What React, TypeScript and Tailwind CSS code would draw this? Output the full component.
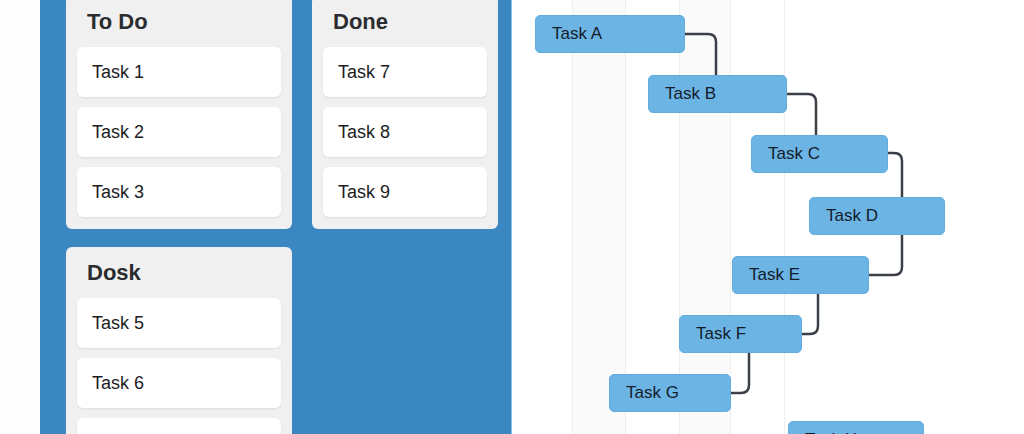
import React from 'react';

const font = { fontFamily: '"Liberation Sans", Arial, sans-serif' };

const columns = [
  { title: 'To Do', tasks: ['Task 1', 'Task 2', 'Task 3'] },
  { title: 'Done', tasks: ['Task 7', 'Task 8', 'Task 9'] },
  { title: 'Dosk', tasks: ['Task 5', 'Task 6', 'Task 7'] },
];

// gantt bars, coordinates relative to the chart canvas
const bars = [
  { label: 'Task A', left: 23, top: 15, width: 150 },
  { label: 'Task B', left: 136, top: 75, width: 139 },
  { label: 'Task C', left: 239, top: 135, width: 137 },
  { label: 'Task D', left: 297, top: 197, width: 136 },
  { label: 'Task E', left: 220, top: 256, width: 137 },
  { label: 'Task F', left: 167, top: 315, width: 123 },
  { label: 'Task G', left: 97, top: 374, width: 122 },
  { label: 'Task H', left: 276, top: 421, width: 136 },
];

const links = [
  'M173 34 H196 Q204 34 204 42 V75',
  'M275 94 H296 Q304 94 304 102 V135',
  'M376 153 H382 Q390 153 390 161 V197',
  'M390 235 V267 Q390 275 382 275 H357',
  'M306 294 V326 Q306 334 298 334 H290',
  'M237 353 V385 Q237 393 229 393 H219',
];

function Column({ title, tasks }: { title: string; tasks: string[] }) {
  return (
    <div className="rounded-md bg-[#f0f0f0] px-[11px] pt-3 pb-3">
      <h2 className="pl-[10px] text-[22px] leading-7 font-bold text-[#2a2c30] mb-[11px]">
        {title}
      </h2>
      <div className="flex flex-col gap-[10px]">
        {tasks.map((t, i) => (
          <div
            key={i}
            className="h-[50px] flex items-center rounded-md bg-white px-[15px] text-[18px] text-[#1c1c1e] shadow-[0_1px_2px_rgba(0,0,0,0.08)]"
          >
            {t}
          </div>
        ))}
      </div>
    </div>
  );
}

export default function App() {
  return (
    <div className="flex h-[434px] w-[1024px] overflow-hidden bg-white" style={font}>
      <div className="w-[40px] shrink-0 bg-[#fdfdfd]" />

      {/* kanban board */}
      <div className="w-[472px] shrink-0 bg-[#3a87c2] pl-[26px] pr-[14px] border-r border-[#8cc0e6]">
        <div className="-mt-1 grid grid-cols-[226px_186px] gap-x-5 gap-y-[18px] items-start">
          {columns.map((c) => (
            <Column key={c.title} title={c.title} tasks={c.tasks} />
          ))}
        </div>
      </div>

      {/* gantt chart */}
      <div className="relative flex-1 bg-white">
        <div className="absolute inset-y-0 left-[60px] w-[54px] bg-[#fafafa] border-x border-[#eeeeee]" />
        <div className="absolute inset-y-0 left-[167px] w-[52px] bg-[#fafafa] border-x border-[#eeeeee]" />
        <div className="absolute inset-y-0 left-[272px] w-px bg-[#eeeeee]" />

        <svg className="absolute inset-0" width="512" height="434">
          {links.map((d, i) => (
            <path key={i} d={d} fill="none" stroke="#3b4048" strokeWidth="2.5" />
          ))}
        </svg>

        {bars.map((b) => (
          <div
            key={b.label}
            className="absolute h-[38px] flex items-center rounded-[5px] border border-[#62ade0] bg-[#6cb4e4] pl-4 text-[17px] text-[#131c2a]"
            style={{ left: b.left, top: b.top, width: b.width }}
          >
            {b.label}
          </div>
        ))}
      </div>
    </div>
  );
}
